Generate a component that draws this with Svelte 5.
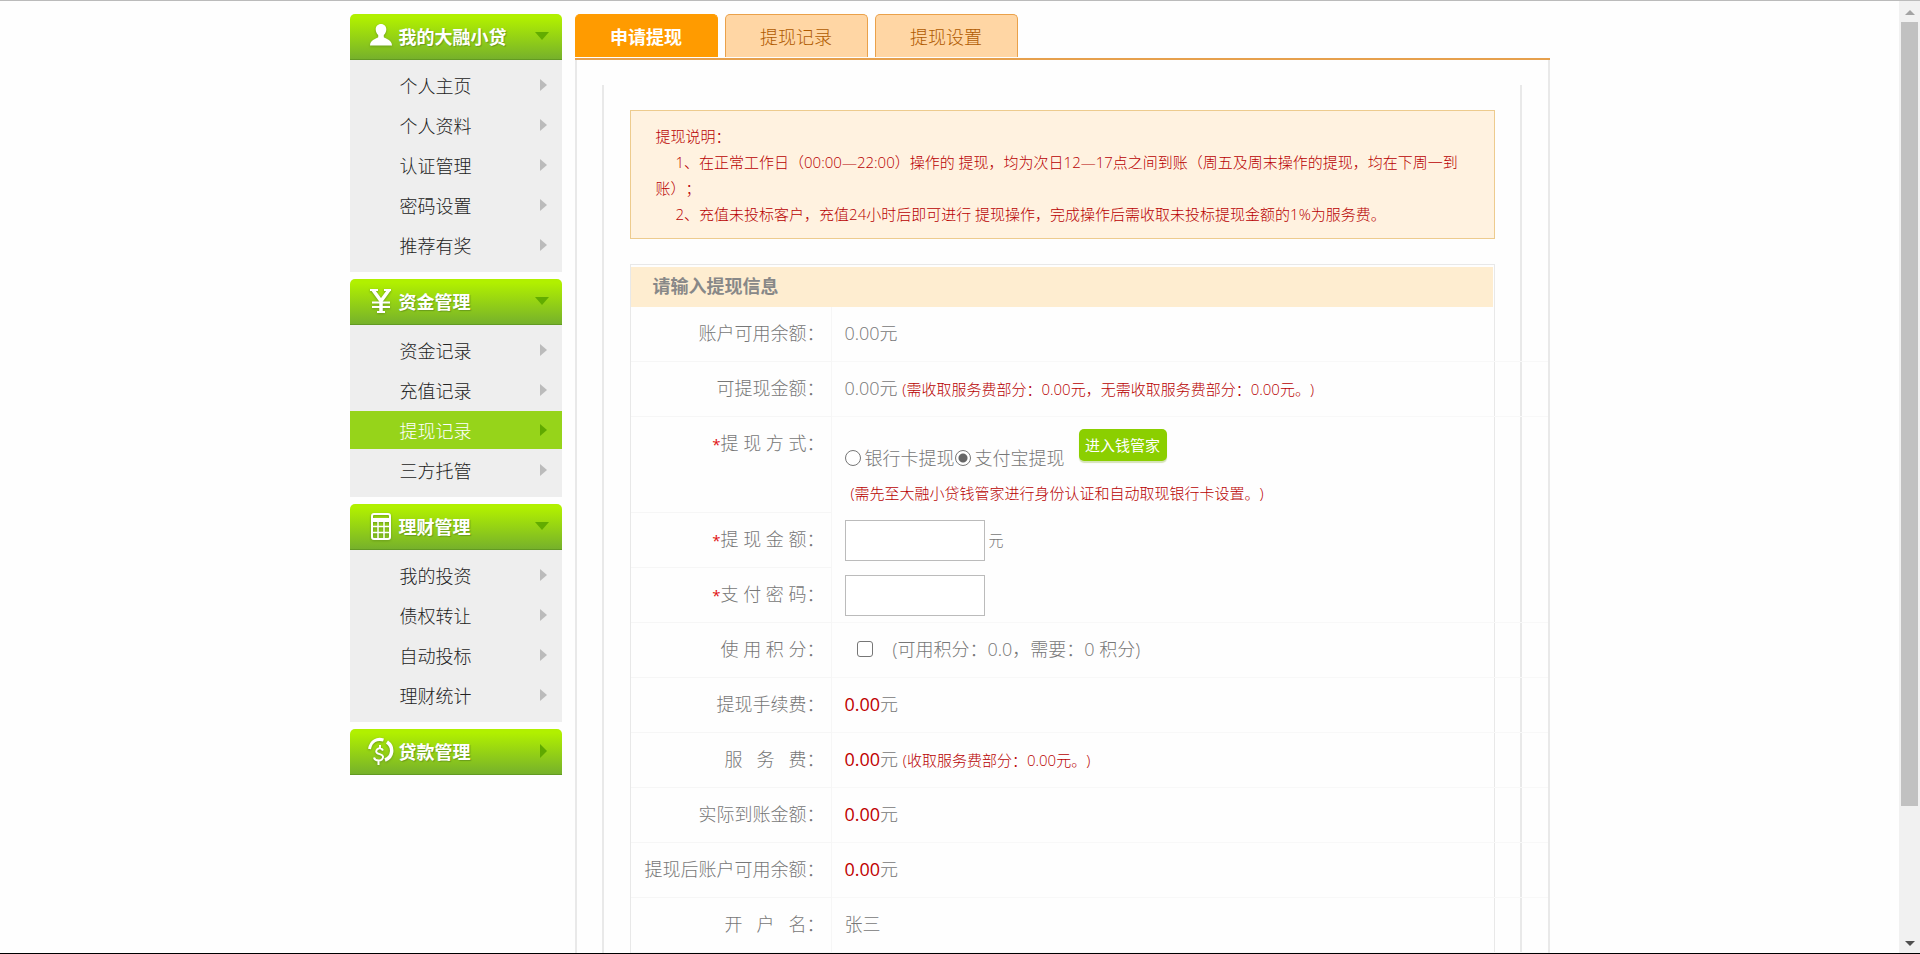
<script>
  let groups = $state([
    {
      title: "我的大融小贷",
      icon: "user",
      open: true,
      items: ["个人主页", "个人资料", "认证管理", "密码设置", "推荐有奖"],
    },
    {
      title: "资金管理",
      icon: "yen",
      open: true,
      items: ["资金记录", "充值记录", "提现记录", "三方托管"],
    },
    {
      title: "理财管理",
      icon: "calc",
      open: true,
      items: ["我的投资", "债权转让", "自动投标", "理财统计"],
    },
    { title: "贷款管理", icon: "loan", open: false, items: [] },
  ]);

  const current = "提现记录";
  const tabs = ["申请提现", "提现记录", "提现设置"];

  let tab = $state("申请提现");
  let method = $state("alipay");
  let usePoints = $state(false);
</script>

<div class="window">
  <div class="page">
    <div class="wrap">
      <nav class="side">
        {#each groups as group}
          <section>
            <button class="head" type="button" onclick={() => (group.open = !group.open)}>
              <svg class="icon" viewBox="0 0 26 28" width="26" height="28" aria-hidden="true">
                {#if group.icon === "user"}
                  <path
                    fill="#fff"
                    d="M13 2c3.200 0 5.300 2.300 5.300 5.500 0 2.200-1 4.300-2.500 5.500v2.200c1.500 1.500 8.200 2.300 8.200 8.300H2c0-6 6.700-6.800 8.200-8.300V13c-1.500-1.200-2.500-3.300-2.500-5.500C7.700 4.300 9.800 2 13 2z"
                  />
                {:else if group.icon === "yen"}
                  <g fill="none" stroke="#fff">
                    <path stroke-width="3.500" d="M5 3l8 11M21 3l-8 11M13 13v12" />
                    <path stroke-width="2" d="M2 3h8M16 3h7M4 15.500h18M4 20h18M9 25h8" />
                  </g>
                {:else if group.icon === "calc"}
                  <rect x="4" y="2" width="18" height="25" rx="2" fill="none" stroke="#fff" stroke-width="2" />
                  <path fill="#fff" d="M4 6h18v4H4z" />
                  <path fill="none" stroke="#fff" stroke-width="1.500" d="M10 9v17M16 9v17M4 14.500h18M4 20.500h18" />
                {:else}
                  <g fill="none" stroke="#fff">
                    <path stroke-width="3" d="M1.500 12C3 4 9 1 15.500 3" />
                    <path stroke-width="3.500" d="M19 5c7 5 6 15-2 18" />
                    <path
                      stroke-width="2"
                      d="M15 13.500c-1-2-3-2.500-4.500-2s-3.500 3-1.500 4.500 5.500 1 6 3.500-2 4-4.500 4-4-1-4.500-3M12 8v4M10.500 23v5"
                    />
                  </g>
                {/if}
              </svg>
              {group.title}
              <i class="arrow" class:down={group.open}></i>
            </button>
            {#if group.open && group.items.length}
              <ul>
                {#each group.items as item}
                  <li>
                    <a href="#top" class:active={item === current}>{item}<i class="arrow"></i></a>
                  </li>
                {/each}
              </ul>
            {/if}
          </section>
        {/each}
      </nav>

      <main>
        <div class="tabs">
          {#each tabs as name}
            <button type="button" class="tab" class:on={tab === name} onclick={() => (tab = name)}>
              {name}
            </button>
          {/each}
        </div>

        <div class="panel">
          <div class="inner">
            <div class="notice">
              <p>提现说明：</p>
              <p class="indent">
                1、在正常工作日（00:00—22:00）操作的 提现，均为次日12—17点之间到账（周五及周末操作的提现，均在下周一到账）；
              </p>
              <p class="indent">
                2、充值未投标客户，充值24小时后即可进行 提现操作，完成操作后需收取未投标提现金额的1%为服务费。
              </p>
            </div>

            <form class="form">
              <h2>请输入提现信息</h2>
              <div class="row">
                <span class="label">账户可用余额：</span>
                <div class="value">0.00元</div>
              </div>
              <div class="row">
                <span class="label">可提现金额：</span>
                <div class="value">
                  0.00元 <small>(需收取服务费部分：0.00元，无需收取服务费部分：0.00元。)</small>
                </div>
              </div>
              <div class="row">
                <span class="label"><b>*</b>提 现 方 式：</span>
                <div class="value method">
                  <div class="choices">
                    <label><input type="radio" name="method" value="bank" bind:group={method} />银行卡提现</label>
                    <label><input type="radio" name="method" value="alipay" bind:group={method} />支付宝提现</label>
                    <button class="enter" type="button">进入钱管家</button>
                  </div>
                  <small>(需先至大融小贷钱管家进行身份认证和自动取现银行卡设置。)</small>
                </div>
              </div>
              <div class="row">
                <label class="label" for="amount"><b>*</b>提 现 金 额：</label>
                <div class="value field open">
                  <input id="amount" class="text" type="text" /><span class="unit">元</span>
                </div>
              </div>
              <div class="row">
                <label class="label" for="paypwd"><b>*</b>支 付 密 码：</label>
                <div class="value field"><input id="paypwd" class="text" type="password" /></div>
              </div>
              <div class="row">
                <label class="label" for="points">使 用 积 分：</label>
                <div class="value points">
                  <input id="points" type="checkbox" bind:checked={usePoints} />
                  <span>(可用积分：0.0，需要：0 积分)</span>
                </div>
              </div>
              <div class="row">
                <span class="label">提现手续费：</span>
                <div class="value"><em>0.00</em>元</div>
              </div>
              <div class="row">
                <span class="label">服&nbsp;&nbsp;&nbsp;务&nbsp;&nbsp;&nbsp;费：</span>
                <div class="value"><em>0.00</em>元 <small>(收取服务费部分：0.00元。)</small></div>
              </div>
              <div class="row">
                <span class="label">实际到账金额：</span>
                <div class="value"><em>0.00</em>元</div>
              </div>
              <div class="row">
                <span class="label">提现后账户可用余额：</span>
                <div class="value"><em>0.00</em>元</div>
              </div>
              <div class="row">
                <span class="label">开&nbsp;&nbsp;&nbsp;户&nbsp;&nbsp;&nbsp;名：</span>
                <div class="value">张三</div>
              </div>
            </form>
          </div>
        </div>
      </main>
    </div>
  </div>

  <div class="scrollbar" aria-hidden="true">
    <i class="up"></i>
    <div class="track"><div class="thumb"></div></div>
    <i class="dn"></i>
  </div>
</div>

<style>
  :global(body) {
    margin: 0;
    background: #fefefe;
  }

  .window {
    display: flex;
    box-sizing: border-box;
    height: 100vh;
    border-top: 1px solid #bbb;
    border-bottom: 1px solid #000;
    color: #777;
    font: 300 18px "Open Sans", "Noto Sans CJK SC", sans-serif;
    text-spacing-trim: space-all;
    overflow: hidden;
  }

  button,
  input {
    font: inherit;
  }

  .page {
    flex: 1;
    overflow-y: auto;
    scrollbar-width: none;
  }

  .wrap {
    display: flex;
    gap: 13px;
    max-width: 1200px;
    min-height: 100%;
    margin: 0 auto;
    padding-top: 13px;
    box-sizing: border-box;
  }

  /* side menu */
  .side {
    display: flex;
    flex-direction: column;
    flex: 0 0 212px;
    gap: 7px;
  }

  .head {
    display: flex;
    align-items: center;
    width: 100%;
    height: 46px;
    padding: 0 13px 2px 18px;
    border: 0;
    border-bottom: 1px solid #629a22;
    border-radius: 5px 5px 0 0;
    background: linear-gradient(#b1f000 8%, #76b12b);
    color: #fff;
    font-weight: 700;
    text-shadow: 1px 1px 1px #6a9c1c;
    cursor: pointer;
  }

  .icon {
    margin-right: 5px;
    filter: drop-shadow(0 1px 1px #6a9c1c);
  }

  .arrow {
    width: 0;
    height: 0;
    margin: 0 2px 0 auto;
    border: 6px solid transparent;
    border-left: 7px solid #bbb;
    border-right: 0;
  }

  .head .arrow {
    border-width: 7px;
    border-left-color: #5fa800;
    border-right: 0;
  }

  .head .arrow.down {
    margin-right: 0;
    border: 7px solid transparent;
    border-top: 8px solid #62ac00;
    border-bottom: 0;
  }

  .side ul {
    margin: 0;
    padding: 6px 0;
    background: #eee;
    list-style: none;
  }

  .side li {
    padding-bottom: 2px;
  }

  .side a {
    display: flex;
    align-items: center;
    box-sizing: border-box;
    height: 38px;
    padding: 0 13px 1px 50px;
    color: #222;
    text-decoration: none;
  }

  .side a.active {
    background: #96d41a;
    color: #fff;
  }

  .side a.active .arrow {
    border-left-color: #5fa800;
  }

  /* tabs */
  main {
    display: flex;
    flex: 1;
    flex-direction: column;
    min-width: 0;
  }

  .tabs {
    display: flex;
    gap: 7px;
    padding-bottom: 1px;
    border-bottom: 2px solid #e6a04c;
  }

  .tab {
    width: 143px;
    height: 43px;
    padding: 0 0 1px;
    border: 1px solid #eaa14a;
    border-bottom: 0;
    border-radius: 5px 5px 0 0;
    background: #ffd6a4;
    color: #b05a00;
    cursor: pointer;
  }

  .tab.on {
    border-color: #ff9b00;
    background: #ff9b00;
    color: #fff;
    font-weight: 700;
  }

  .panel {
    display: flex;
    flex: 1;
    padding: 25px 26px 0 25px;
    border: solid #e9e9e9;
    border-width: 0 2px;
  }

  .inner {
    flex: 1;
    min-width: 0;
    padding: 25px 25px 0 26px;
    border: solid #e9e9e9;
    border-width: 0 2px;
  }

  .notice {
    margin-bottom: 25px;
    padding: 12px 24px 11px 25px;
    border: 1px solid #edcb8e;
    background: #fff2e0;
    color: #b80000;
    font-size: 15px;
    line-height: 26px;
  }

  .notice p {
    margin: 0;
  }

  .notice .indent {
    text-indent: 20px;
  }

  /* withdraw form */
  .form {
    padding-top: 2px;
    border: 1px solid #e8e8e8;
    border-bottom: 0;
  }

  h2 {
    margin: 0 1px 0 0;
    padding: 0 0 2px 22px;
    background: #feedd0;
    color: #888;
    font-size: 18px;
    line-height: 38px;
  }

  .row {
    display: grid;
    grid-template-columns: 201px 1fr;
    margin-right: -54px;
    line-height: 52px;
  }

  .label {
    padding: 0 6px 2px 0;
    border: solid #f6f6f6;
    border-width: 0 1px 1px 0;
    text-align: right;
  }

  .label b {
    color: #e01010;
    font-size: 15px;
    font-weight: 400;
    line-height: 15px;
  }

  .value {
    padding: 0 0 2px 13px;
    border-bottom: 1px solid #f8f8f8;
  }

  .value.open,
  .value.method {
    border-bottom-color: transparent;
  }

  em {
    color: #c00000;
    font-style: normal;
    font-weight: 400;
  }

  small {
    color: #b80000;
    font-size: 15px;
    line-height: 15px;
  }

  .method {
    padding: 12px 0 7px 13px;
    line-height: 22px;
  }

  .choices {
    display: flex;
    align-items: flex-end;
    height: 40px;
  }

  .choices label {
    display: flex;
    align-items: center;
  }

  .method small {
    display: block;
    margin-top: 12px;
    padding-left: 6px;
    line-height: 24px;
  }

  input[type="radio"],
  input[type="checkbox"] {
    flex: none;
    box-sizing: border-box;
    width: 16px;
    height: 16px;
    margin: 0;
    border: 1px solid #767676;
    border-radius: 3px;
    background: #fff;
    appearance: none;
  }

  input[type="radio"] {
    margin-right: 4px;
    border-radius: 50%;
  }

  input[type="radio"]:checked {
    background: radial-gradient(circle, #666 4px, #fff 5px);
  }

  input[type="checkbox"]:checked {
    background: #767676;
  }

  .enter {
    align-self: flex-start;
    width: 88px;
    height: 32px;
    margin-left: 14px;
    padding: 0;
    border: 0;
    border-radius: 5px;
    background: #8bcf00;
    box-shadow: 0 2px 1px #d5e3b8;
    color: #fff;
    font-size: 15px;
    font-weight: 400;
    white-space: nowrap;
    cursor: pointer;
  }

  .field {
    display: flex;
    align-items: center;
    padding-bottom: 0;
  }

  .text {
    box-sizing: border-box;
    width: 140px;
    height: 41px;
    padding: 0 8px;
    border: 1px solid #bbb;
    background: #fff;
  }

  .unit {
    margin-left: 4px;
    font-size: 15px;
  }

  .points {
    display: flex;
    align-items: center;
    gap: 20px;
    padding-left: 25px;
  }

  /* window scroll bar */
  .scrollbar {
    display: flex;
    flex: 0 0 21px;
    flex-direction: column;
    align-items: center;
    background: #f1f1f1;
  }

  .up,
  .dn {
    width: 0;
    height: 0;
    border: 5px solid transparent;
  }

  .up {
    margin: 9px 0 7px;
    border-top: 0;
    border-bottom-color: #a3a3a3;
  }

  .dn {
    margin: 7px 0;
    border-top-color: #505050;
    border-bottom: 0;
  }

  .track {
    flex: 1;
    width: 17px;
  }

  .thumb {
    height: 86%;
    background: #c1c1c1;
  }
</style>
